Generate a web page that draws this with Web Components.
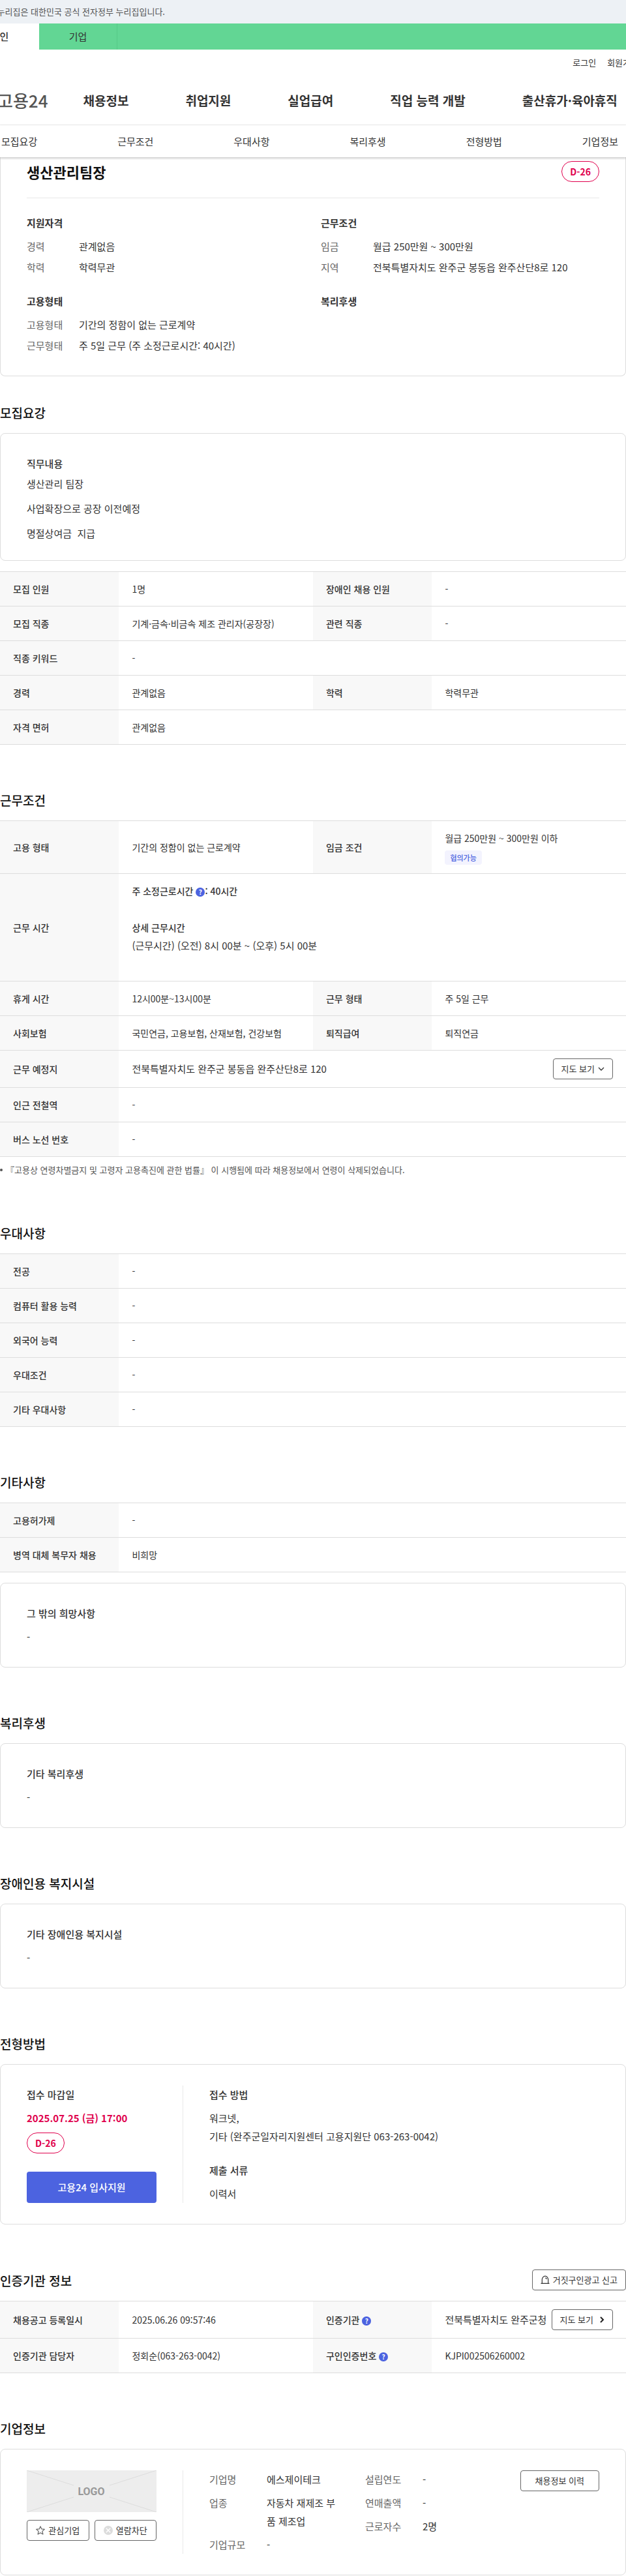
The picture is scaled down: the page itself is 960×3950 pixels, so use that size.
<!DOCTYPE html>
<html lang="ko">
<head>
<meta charset="utf-8">
<meta name="viewport" content="width=device-width, initial-scale=1">
<title>생산관리팀장 - 고용24</title>
<style>
  body {
    margin: 0;
    background: #fff;
    color: #333;
    font: 15px/28px "Noto Sans CJK KR", sans-serif;
  }
</style>
</head>
<body>

<gov-banner>이 누리집은 대한민국 공식 전자정부 누리집입니다.</gov-banner>
<user-tabs></user-tabs>
<site-header></site-header>
<section-nav></section-nav>

<main>
  <info-card class="summary" attached>
    <job-title>생산관리팀장<d-day slot="badge">D-26</d-day></job-title>
    <job-summary></job-summary>
  </info-card>

  <job-section heading="모집요강" first>
    <info-card>
      <text-block heading="직무내용" loose>
        <p>생산관리 팀장</p>
        <p>사업확장으로 공장 이전예정</p>
        <p>명절상여금&nbsp; 지급</p>
      </text-block>
    </info-card>
    <info-table rows="recruit"></info-table>
  </job-section>

  <job-section heading="근무조건">
    <info-table rows="conditions"></info-table>
    <foot-note>『고용상 연령차별금지 및 고령자 고용촉진에 관한 법률』 이 시행됨에 따라 채용정보에서 연령이 삭제되었습니다.</foot-note>
  </job-section>

  <job-section heading="우대사항">
    <info-table rows="preference"></info-table>
  </job-section>

  <job-section heading="기타사항">
    <info-table rows="etc"></info-table>
    <info-card>
      <text-block heading="그 밖의 희망사항"><p>-</p></text-block>
    </info-card>
  </job-section>

  <job-section heading="복리후생">
    <info-card>
      <text-block heading="기타 복리후생"><p>-</p></text-block>
    </info-card>
  </job-section>

  <job-section heading="장애인용 복지시설">
    <info-card>
      <text-block heading="기타 장애인용 복지시설"><p>-</p></text-block>
    </info-card>
  </job-section>

  <job-section heading="전형방법">
    <info-card>
      <apply-info></apply-info>
    </info-card>
  </job-section>

  <job-section heading="인증기관 정보">
    <line-button slot="action">
      <svg width="14" height="14" viewBox="0 0 14 14" fill="none" stroke="#333" stroke-width="1.2"><path d="M2.3 12.4V6.6a4.7 5.4 0 0 1 9.4 0v5.8M.5 12.4h13M7.3 3.8c1.2.2 1.9.9 2.1 2.1"/></svg>
      거짓구인광고 신고
    </line-button>
    <info-table rows="agency"></info-table>
  </job-section>

  <job-section heading="기업정보">
    <info-card>
      <company-info></company-info>
    </info-card>
  </job-section>
</main>

<script>
// small helper so every element attaches its shadow root the same way
class BaseElement extends HTMLElement {
  connectedCallback() {
    if (this.shadowRoot) return;
    this.attachShadow({ mode: "open" });
    this.shadowRoot.innerHTML = this.render();
  }
}

class GovBanner extends BaseElement {
  render() {
    return `
      <style>
        :host {
          display: block;
          overflow: hidden;
          background: #edf1f5;
          color: #555;
          font-size: 13px;
          line-height: 36px;
        }
        .inner {
          margin-left: -20px;
          white-space: nowrap;
        }
      </style>
      <div class="inner"><slot></slot></div>
    `;
  }
}

class UserTabs extends BaseElement {
  render() {
    return `
      <style>
        :host {
          display: block;
          overflow: hidden;
          background: #62d694;
        }
        nav {
          display: flex;
          margin-left: -60px;
        }
        a {
          box-sizing: border-box;
          width: 120px;
          line-height: 40px;
          text-align: center;
          color: #333;
          text-decoration: none;
          border-right: 1px solid #57c987;
        }
        a.active {
          background: #fff;
          border-color: #fff;
          font-weight: 500;
        }
      </style>
      <nav>
        <a href="#" class="active">개인</a>
        <a href="#">기업</a>
      </nav>
    `;
  }
}

class SiteHeader extends BaseElement {
  render() {
    return `
      <style>
        :host {
          display: block;
          overflow: hidden;
          border-bottom: 1px solid #e8e8e8;
        }
        a {
          color: #333;
          text-decoration: none;
          white-space: nowrap;
        }
        .util {
          display: flex;
          justify-content: flex-end;
          gap: 17px;
          margin-right: -19px;
          padding-top: 10px;
          font-size: 13px;
          line-height: 20px;
        }
        .main {
          display: flex;
          align-items: center;
          gap: 54px;
          padding: 20px 0 9px;
          line-height: 56px;
        }
        .logo {
          margin-left: -4px;
          font-size: 26px;
          font-weight: 500;
          color: #555;
        }
        nav {
          display: flex;
          gap: 87px;
        }
        nav a {
          font-size: 19px;
          font-weight: 700;
        }
      </style>
      <div class="util">
        <a href="#">로그인</a>
        <a href="#">회원가입</a>
      </div>
      <div class="main">
        <a href="#" class="logo">고용24</a>
        <nav>
          <a href="#">채용정보</a>
          <a href="#">취업지원</a>
          <a href="#">실업급여</a>
          <a href="#">직업 능력 개발</a>
          <a href="#">출산휴가·육아휴직</a>
        </nav>
      </div>
    `;
  }
}

class SectionNav extends BaseElement {
  render() {
    return `
      <style>
        :host {
          display: block;
          position: relative;
          background: #fff;
          box-shadow: 0 2px 3px rgba(0,0,0,.2);
        }
        nav {
          display: flex;
          justify-content: space-between;
          padding: 0 12px 0 2px;
        }
        a {
          line-height: 49px;
          color: #333;
          text-decoration: none;
        }
      </style>
      <nav>
        <a href="#">모집요강</a>
        <a href="#">근무조건</a>
        <a href="#">우대사항</a>
        <a href="#">복리후생</a>
        <a href="#">전형방법</a>
        <a href="#">기업정보</a>
      </nav>
    `;
  }
}

class InfoCard extends BaseElement {
  render() {
    return `
      <style>
        :host {
          display: block;
          padding: 32px 40px;
          border: 1px solid #ddd;
          border-radius: 8px;
        }
        /* sits right under the sticky nav */
        :host([attached]) {
          padding-top: 6px;
          border-top: 0;
          border-radius: 0 0 8px 8px;
        }
      </style>
      <slot></slot>
    `;
  }
}

class JobTitle extends BaseElement {
  render() {
    return `
      <style>
        :host {
          display: flex;
          align-items: center;
          justify-content: space-between;
          padding-bottom: 24px;
          border-bottom: 1px solid #e8e8e8;
        }
        h1 {
          margin: 0;
          font-size: 22px;
          line-height: 28px;
          font-weight: 700;
          color: #111;
        }
      </style>
      <h1><slot></slot></h1>
      <slot name="badge"></slot>
    `;
  }
}

class DDay extends BaseElement {
  render() {
    return `
      <style>
        :host {
          display: inline-block;
          padding: 0 12px;
          border: 1px solid #e0004d;
          border-radius: 16px;
          color: #e0004d;
          font-size: 14px;
          font-weight: 700;
          line-height: 30px;
        }
      </style>
      <slot></slot>
    `;
  }
}

const DL_STYLE = `
  h3 {
    margin: 0 0 8px;
    font-size: 15px;
    font-weight: 700;
    line-height: 28px;
  }
  dl {
    display: grid;
    grid-template-columns: 80px 1fr;
    row-gap: 4px;
    margin: 0;
  }
  dt { color: #666; }
  dd { margin: 0; }
`;

class JobSummary extends BaseElement {
  render() {
    return `
      <style>
        ${DL_STYLE}
        :host {
          display: grid;
          grid-template-columns: 1fr 1fr;
          gap: 24px;
          padding-top: 24px;
        }
      </style>
      <section>
        <h3>지원자격</h3>
        <dl>
          <dt>경력</dt><dd>관계없음</dd>
          <dt>학력</dt><dd>학력무관</dd>
        </dl>
      </section>
      <section>
        <h3>근무조건</h3>
        <dl>
          <dt>임금</dt><dd>월급 250만원 ~ 300만원</dd>
          <dt>지역</dt><dd>전북특별자치도 완주군 봉동읍 완주산단8로 120</dd>
        </dl>
      </section>
      <section>
        <h3>고용형태</h3>
        <dl>
          <dt>고용형태</dt><dd>기간의 정함이 없는 근로계약</dd>
          <dt>근무형태</dt><dd>주 5일 근무 (주 소정근로시간: 40시간)</dd>
        </dl>
      </section>
      <section>
        <h3>복리후생</h3>
      </section>
    `;
  }
}

class JobSection extends BaseElement {
  render() {
    return `
      <style>
        :host {
          display: block;
          margin-top: 69px;
        }
        :host([first]) {
          margin-top: 40px;
        }
        header {
          display: flex;
          align-items: center;
          justify-content: space-between;
          margin-bottom: 16px;
        }
        h2 {
          margin: 0;
          font-size: 19px;
          line-height: 31px;
          font-weight: 500;
          color: #111;
        }
        .body {
          display: flex;
          flex-direction: column;
          gap: 16px;
        }
      </style>
      <header>
        <h2>${this.getAttribute("heading")}</h2>
        <slot name="action"></slot>
      </header>
      <div class="body"><slot></slot></div>
    `;
  }
}

class TextBlock extends BaseElement {
  render() {
    return `
      <style>
        :host { display: block; }
        h3 {
          margin: 0 0 8px;
          font-size: 15px;
          line-height: 28px;
          font-weight: 500;
        }
        ::slotted(p) { margin: 0; }
        .text {
          display: flex;
          flex-direction: column;
        }
        :host([loose]) .text {
          gap: 20px;
          line-height: 18px;
        }
      </style>
      <h3>${this.getAttribute("heading")}</h3>
      <div class="text"><slot></slot></div>
    `;
  }
}

class HelpTip extends BaseElement {
  render() {
    return `
      <style>
        :host {
          display: inline-block;
          line-height: 14px;
        }
        button {
          display: block;
          width: 14px;
          height: 14px;
          padding: 0;
          border: 0;
          border-radius: 50%;
          background: #4c63e0;
          color: #fff;
          font: 700 10px/14px "Noto Sans CJK KR", sans-serif;
          cursor: pointer;
        }
      </style>
      <button type="button" aria-label="도움말">?</button>
    `;
  }
}

class LineButton extends BaseElement {
  render() {
    return `
      <style>
        :host {
          display: inline-flex;
          flex: none;
        }
        button {
          display: flex;
          flex: 1;
          align-items: center;
          justify-content: center;
          gap: 5px;
          padding: 0 12px;
          background: #fff;
          border: 1px solid #666;
          border-radius: 4px;
          color: #333;
          font: inherit;
          font-size: 13px;
          line-height: 30px;
          white-space: nowrap;
          cursor: pointer;
        }
        :host([wide]) button { padding: 0 22px; }
        ::slotted(svg) { flex: none; }
      </style>
      <button type="button"><slot></slot></button>
    `;
  }
}

class FootNote extends BaseElement {
  render() {
    return `
      <style>
        :host {
          display: flex;
          align-items: center;
          gap: 5px;
          margin-top: -8px;
          font-size: 13px;
          line-height: 24px;
          color: #555;
        }
        i {
          width: 4px;
          height: 4px;
          border-radius: 50%;
          background: #555;
        }
      </style>
      <i></i><span><slot></slot></span>
    `;
  }
}

const CHEVRON_DOWN = `<svg width="10" height="10" viewBox="0 0 10 10" fill="none" stroke="#333" stroke-width="1.3"><path d="M1 3l4 4 4-4"/></svg>`;
const CHEVRON_RIGHT = `<svg width="12" height="10" viewBox="0 0 12 10" fill="none" stroke="#222" stroke-width="2"><path d="M6 1l4 4-4 4"/></svg>`;

// [label, value, label, value] - two items means the value spans the row
const TABLES = {
  recruit: [
    ["모집 인원", "1명", "장애인 채용 인원", "-"],
    ["모집 직종", "기계·금속·비금속 제조 관리자(공장장)", "관련 직종", "-"],
    ["직종 키워드", "-"],
    ["경력", "관계없음", "학력", "학력무관"],
    ["자격 면허", "관계없음"],
  ],
  conditions: [
    ["고용 형태", "기간의 정함이 없는 근로계약", "임금 조건", `월급 250만원 ~ 300만원 이하<br><span class="tag">협의가능</span>`],
    ["근무 시간", `
      <b>주 소정근로시간 <help-tip></help-tip>: 40시간</b><br><br>
      <b>상세 근무시간</b>
      <p>(근무시간) (오전) 8시 00분 ~ (오후) 5시 00분</p><br>`],
    ["휴게 시간", "12시00분~13시00분", "근무 형태", "주 5일 근무"],
    ["사회보험", "국민연금, 고용보험, 산재보험, 건강보험", "퇴직급여", "퇴직연금"],
    ["근무 예정지", `<div class="line"><p>전북특별자치도 완주군 봉동읍 완주산단8로 120</p><line-button>지도 보기${CHEVRON_DOWN}</line-button></div>`],
    ["인근 전철역", "-"],
    ["버스 노선 번호", "-"],
  ],
  preference: [
    ["전공", "-"],
    ["컴퓨터 활용 능력", "-"],
    ["외국어 능력", "-"],
    ["우대조건", "-"],
    ["기타 우대사항", "-"],
  ],
  etc: [
    ["고용허가제", "-"],
    ["병역 대체 복무자 채용", "비희망"],
  ],
  agency: [
    ["채용공고 등록일시", "2025.06.26 09:57:46", "인증기관 <help-tip></help-tip>", `<div class="line"><p>전북특별자치도 완주군청</p><line-button>지도 보기${CHEVRON_RIGHT}</line-button></div>`],
    ["인증기관 담당자", "정회순(063-263-0042)", "구인인증번호 <help-tip></help-tip>", "KJPI002506260002"],
  ],
};

class InfoTable extends BaseElement {
  render() {
    const rows = TABLES[this.getAttribute("rows")].map(([a, b, c, d]) =>
      c
        ? `<tr><th scope="row">${a}</th><td>${b}</td><th scope="row">${c}</th><td>${d}</td></tr>`
        : `<tr><th scope="row">${a}</th><td colspan="3">${b}</td></tr>`
    ).join("");

    return `
      <style>
        :host {
          display: block;
          border-top: 1px solid #ddd;
        }
        table {
          width: 100%;
          table-layout: fixed;
          border-spacing: 0;
          font-size: 14px;
        }
        .label { width: 19%; }
        .value { width: 31%; }
        th, td {
          padding: 12px 20px;
          border-bottom: 1px solid #ddd;
          text-align: left;
          vertical-align: middle;
          white-space: nowrap;
        }
        th {
          background: #f8f8f8;
          font-weight: 500;
        }
        b { font-weight: 500; }
        p {
          margin: 0;
          font-size: 15px;
        }
        .line {
          display: flex;
          align-items: center;
          justify-content: space-between;
        }
        .tag {
          display: inline-block;
          padding: 0 8px;
          border-radius: 4px;
          background: #f3f3fe;
          color: #4c63e0;
          font-size: 11px;
          font-weight: 500;
          line-height: 22px;
          vertical-align: middle;
        }
      </style>
      <table>
        <colgroup><col class="label"><col class="value"><col class="label"><col class="value"></colgroup>
        <tbody>${rows}</tbody>
      </table>
    `;
  }
}

class ApplyInfo extends BaseElement {
  render() {
    return `
      <style>
        :host { display: flex; }
        .due {
          display: flex;
          flex-direction: column;
          align-items: flex-start;
          gap: 8px;
          box-sizing: border-box;
          width: 240px;
          padding-right: 40px;
          border-right: 1px solid #e8e8e8;
        }
        .how {
          flex: 1;
          padding-left: 40px;
        }
        h3 {
          margin: 0;
          font-size: 15px;
          font-weight: 500;
        }
        p { margin: 0; }
        .how p { margin: 8px 0 24px; }
        .how p:last-child { margin-bottom: 0; }
        time {
          color: #e0004d;
          font-weight: 700;
        }
        .apply {
          align-self: stretch;
          margin-top: 20px;
          padding: 0;
          border: 0;
          border-radius: 4px;
          background: #4c63e0;
          color: #fff;
          font: inherit;
          font-weight: 500;
          line-height: 48px;
          cursor: pointer;
        }
      </style>
      <div class="due">
        <h3>접수 마감일</h3>
        <time datetime="2025-07-25T17:00">2025.07.25 (금) 17:00</time>
        <d-day>D-26</d-day>
        <button type="button" class="apply">고용24 입사지원</button>
      </div>
      <div class="how">
        <h3>접수 방법</h3>
        <p>워크넷,<br>기타 (완주군일자리지원센터 고용지원단 063-263-0042)</p>
        <h3>제출 서류</h3>
        <p>이력서</p>
      </div>
    `;
  }
}

class CompanyInfo extends BaseElement {
  render() {
    return `
      <style>
        ${DL_STYLE}
        :host { display: flex; }
        .brand {
          box-sizing: border-box;
          width: 240px;
          padding-right: 40px;
          border-right: 1px solid #e8e8e8;
        }
        .logo {
          display: block;
          width: 100%;
          height: 64px;
          background: #ededed;
        }
        .actions {
          display: grid;
          grid-template-columns: 1fr 1fr;
          gap: 8px;
          margin-top: 12px;
        }
        .facts {
          display: grid;
          flex: 1;
          grid-template-columns: 199px 1fr;
          gap: 40px;
          align-items: start;
          padding-left: 40px;
        }
        dl {
          grid-template-columns: 88px 1fr;
          row-gap: 8px;
        }
        dd { word-break: break-all; }
        line-button { align-self: flex-start; }
        .actions line-button { align-self: stretch; }
      </style>
      <div class="brand">
        <svg class="logo" viewBox="0 0 199 64" role="img" aria-label="LOGO">
          <path d="M0 0l72 23M127 23l72-23M0 64l72-23M127 41l72 23" stroke="#dcdcdc" fill="none"/>
          <text x="99" y="38" text-anchor="middle" font-family="Roboto, sans-serif" font-size="16" font-weight="700" fill="#999">LOGO</text>
        </svg>
        <div class="actions">
          <line-button>
            <svg width="14" height="14" viewBox="0 0 14 14" fill="none" stroke="#666" stroke-width="1.2" stroke-linejoin="round"><path d="M7 .9l1.8 4 4.5.5-3.4 3 1 4.6L7 10.7 3.1 13l1-4.6-3.4-3 4.5-.5z"/></svg>
            관심기업
          </line-button>
          <line-button>
            <svg width="14" height="14" viewBox="0 0 14 14"><circle cx="7" cy="7" r="7" fill="#dcdcdc"/><path d="M3.8 3.8l6.4 6.4M10.2 3.8l-6.4 6.4" stroke="#fff" stroke-width="1.4"/></svg>
            열람차단
          </line-button>
        </div>
      </div>
      <div class="facts">
        <dl>
          <dt>기업명</dt><dd>에스제이테크</dd>
          <dt>업종</dt><dd>자동차 재제조 부품 제조업</dd>
          <dt>기업규모</dt><dd>-</dd>
        </dl>
        <dl>
          <dt>설립연도</dt><dd>-</dd>
          <dt>연매출액</dt><dd>-</dd>
          <dt>근로자수</dt><dd>2명</dd>
        </dl>
      </div>
      <line-button wide>채용정보 이력</line-button>
    `;
  }
}

customElements.define("gov-banner", GovBanner);
customElements.define("user-tabs", UserTabs);
customElements.define("site-header", SiteHeader);
customElements.define("section-nav", SectionNav);
customElements.define("info-card", InfoCard);
customElements.define("job-title", JobTitle);
customElements.define("d-day", DDay);
customElements.define("job-summary", JobSummary);
customElements.define("job-section", JobSection);
customElements.define("text-block", TextBlock);
customElements.define("help-tip", HelpTip);
customElements.define("line-button", LineButton);
customElements.define("foot-note", FootNote);
customElements.define("info-table", InfoTable);
customElements.define("apply-info", ApplyInfo);
customElements.define("company-info", CompanyInfo);
</script>
</body>
</html>
